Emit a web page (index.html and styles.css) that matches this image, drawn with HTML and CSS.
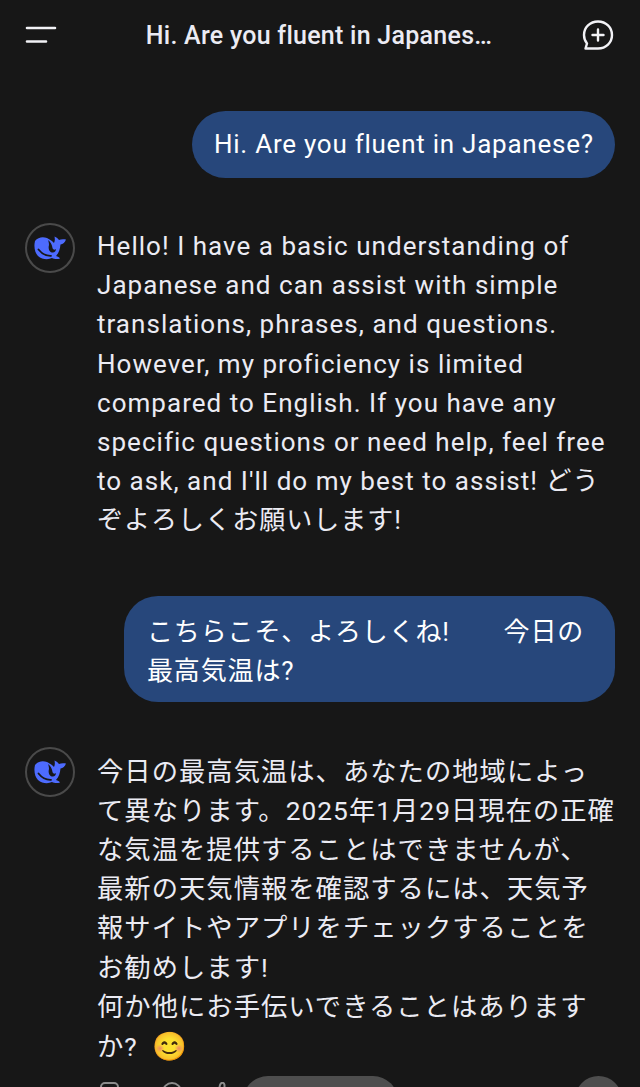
FILE: index.html
```html
<!DOCTYPE html>
<html lang="ja">
<head>
    <meta charset="UTF-8">
    <meta name="viewport" content="width=device-width, initial-scale=1.0">
    <title>Chat</title>
    <link rel="stylesheet" href="styles.css">
</head>
<body>
<div class="screen">
    <div class="topbar">
        <svg class="menu-icon" width="32" height="18" viewBox="0 0 32 18">
            <path d="M2 2H30M2 15.500H21" stroke="#f2f2f6" stroke-width="2.600" stroke-linecap="round" fill="none"/>
        </svg>
        <div class="title">Hi. Are you fluent in Japanes…</div>
        <svg class="new-icon" width="34" height="34" viewBox="0 0 34 34">
            <path d="M17 3.500C25 3.500 31 9.500 31 17C31 24.500 25 30.500 17 30.500H4.500L6 25.500C4 23 3 20 3 17C3 9.500 9 3.500 17 3.500Z" stroke="#f2f2f6" stroke-width="2.400" stroke-linejoin="round" fill="none"/>
            <path d="M17 11.500V22.500M11.500 17H22.500" stroke="#f2f2f6" stroke-width="2.400" stroke-linecap="round"/>
        </svg>
    </div>

    <div class="chat">
        <div class="msg-user msg-one">Hi. Are you fluent in Japanese?</div>

        <div class="msg-bot reply-one">
            <div class="avatar">
                <svg width="32" height="24" viewBox="0 0 32 24">
                    <path d="M1 5C4 1 9 0.500 13 2C16 3.500 18 5 20 7C21 5 21 3 20.500 0.500C22.500 1.500 24 2.500 25 4C27 3 29.500 3 32 3.500C31 6.500 29 8 26.500 8.500C26 13 25 17 22 20C24 20.500 25 21 26 22.500C23 23.500 20 23 18 22C14 24 8 23.500 4 20C1 17 -0.500 11 1 5Z" fill="#4d6bfe"/>
                    <path d="M14 4C17 6 18 9 18.500 12C19 14 21 14 22 13C22 15 20.500 17 18 16.500C15 16 14 12 15 9C15 7 14.500 5 14 4Z" fill="#171717"/>
                    <path d="M4.500 13.500C8 18 12 20 17 19.800" stroke="#171717" stroke-width="1.800" stroke-linecap="round" fill="none"/>
                </svg>
            </div>
            <p class="bot-text">Hello! I have a basic understanding of Japanese and can assist with simple translations, phrases, and questions. However, my proficiency is limited compared to English. If you have any specific questions or need help, feel free to ask, and I'll do my best to assist! どうぞよろしくお願いします!</p>
        </div>

        <div class="msg-user msg-two">こちらこそ、よろしくね!　　今日の<br>最高気温は?</div>

        <div class="msg-bot reply-two">
            <div class="avatar">
                <svg width="32" height="24" viewBox="0 0 32 24">
                    <path d="M1 5C4 1 9 0.500 13 2C16 3.500 18 5 20 7C21 5 21 3 20.500 0.500C22.500 1.500 24 2.500 25 4C27 3 29.500 3 32 3.500C31 6.500 29 8 26.500 8.500C26 13 25 17 22 20C24 20.500 25 21 26 22.500C23 23.500 20 23 18 22C14 24 8 23.500 4 20C1 17 -0.500 11 1 5Z" fill="#4d6bfe"/>
                    <path d="M14 4C17 6 18 9 18.500 12C19 14 21 14 22 13C22 15 20.500 17 18 16.500C15 16 14 12 15 9C15 7 14.500 5 14 4Z" fill="#171717"/>
                    <path d="M4.500 13.500C8 18 12 20 17 19.800" stroke="#171717" stroke-width="1.800" stroke-linecap="round" fill="none"/>
                </svg>
            </div>
            <p class="bot-text bot-ja">今日の最高気温は、あなたの地域によっ<br>て異なります。2025年1月29日現在の正確<br>な気温を提供することはできませんが、<br>最新の天気情報を確認するには、天気予<br>報サイトやアプリをチェックすることを<br>お勧めします!<br>何か他にお手伝いできることはあります<br>か? <span class="emoji">😊</span></p>
        </div>
    </div>

    <div class="actions">
        <svg class="act-icon act-copy" width="20" height="20" viewBox="0 0 20 20">
            <rect x="1" y="1" width="17" height="18" rx="4" stroke="#8c8c8c" stroke-width="2" fill="none"/>
        </svg>
        <svg class="act-icon act-retry" width="22" height="20" viewBox="0 0 22 20">
            <circle cx="11" cy="10" r="9" stroke="#8c8c8c" stroke-width="2" fill="none"/>
        </svg>
        <svg class="act-icon act-like" width="10" height="20" viewBox="0 0 10 20">
            <path d="M1 12L3 3C4 0 7 0 7.500 3V12" stroke="#8c8c8c" stroke-width="2" fill="none"/>
        </svg>
        <span class="pill"></span>
        <span class="round"></span>
    </div>
</div>
</body>
</html>
```

FILE: styles.css
```css
html, body {
    margin: 0;
    height: 100%;
    background-color: #171717;
}
.screen {
    height: 1087px;
    overflow: hidden;
    color: #f2f2f6;
    font-family: Roboto, "Noto Sans CJK JP", sans-serif;
}
.topbar {
    display: flex;
    align-items: center;
    justify-content: space-between;
    height: 70px;
    padding: 0 25px;
}
.title {
    font-size: 25px;
    font-weight: 500;
    letter-spacing: 0.26px;
    color: #ebebf3;
}
.chat {
    padding-right: 25px;
}
.msg-user {
    margin-left: auto;
    background-color: #27477b;
    color: #fff;
    border-radius: 34px;
    font-size: 26px;
    line-height: 39px;
    letter-spacing: 0.75px;
    box-sizing: border-box;
    white-space: nowrap;
}
.msg-one {
    width: 423px;
    height: 67px;
    margin-top: 41px;
    padding: 14px 22px;
}
.msg-two {
    width: 491px;
    height: 106px;
    margin-top: 55px;
    padding: 17px 23px;
    letter-spacing: 0.85px;
}
.msg-bot {
    display: flex;
    gap: 22px;
    padding-left: 25px;
}
.reply-one {
    margin-top: 45px;
}
.reply-two {
    margin-top: 45px;
}
.avatar {
    flex: none;
    display: flex;
    align-items: center;
    justify-content: center;
    width: 50px;
    height: 50px;
    box-sizing: border-box;
    border: 2px solid #4a4a4a;
    border-radius: 50%;
}
.bot-text {
    margin: 0;
    padding-top: 4px;
    font-size: 26px;
    line-height: 39.2px;
    letter-spacing: 1.03px;
    color: #ebebf3;
}
.bot-ja {
    padding-top: 6px;
    font-size: 26.3px;
    white-space: nowrap;
}
.emoji {
    margin-left: 7px;
    font-size: 28px;
}
.actions {
    display: flex;
    align-items: flex-start;
    margin-top: 9px;
    padding-left: 100px;
}
.act-icon {
    flex: none;
    margin-top: 6px;
}
.act-copy {
    margin-right: 41px;
}
.act-retry {
    margin-right: 34px;
}
.act-like {
    margin-right: 16px;
}
.pill {
    width: 155px;
    height: 50px;
    border-radius: 25px;
    background-color: #4e4e4e;
}
.round {
    width: 47px;
    height: 47px;
    margin-left: auto;
    margin-right: 18px;
    border-radius: 50%;
    background-color: #4e4e4e;
}
```
